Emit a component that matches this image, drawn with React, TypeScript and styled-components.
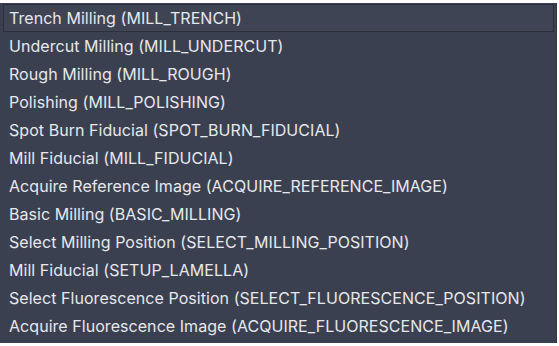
import styled, { createGlobalStyle } from "styled-components";

const GlobalStyle = createGlobalStyle`
    html, body {
        margin: 0;
        padding: 0;
        background: #ffffff;
    }
`

const items = [
    { label: 'Trench Milling', id: 'MILL_TRENCH' },
    { label: 'Undercut Milling', id: 'MILL_UNDERCUT' },
    { label: 'Rough Milling', id: 'MILL_ROUGH' },
    { label: 'Polishing', id: 'MILL_POLISHING' },
    { label: 'Spot Burn Fiducial', id: 'SPOT_BURN_FIDUCIAL' },
    { label: 'Mill Fiducial', id: 'MILL_FIDUCIAL' },
    { label: 'Acquire Reference Image', id: 'ACQUIRE_REFERENCE_IMAGE' },
    { label: 'Basic Milling', id: 'BASIC_MILLING' },
    { label: 'Select Milling Position', id: 'SELECT_MILLING_POSITION' },
    { label: 'Mill Fiducial', id: 'SETUP_LAMELLA' },
    { label: 'Select Fluorescence Position', id: 'SELECT_FLUORESCENCE_POSITION' },
    { label: 'Acquire Fluorescence Image', id: 'ACQUIRE_FLUORESCENCE_IMAGE' },
]

const Page = styled.div`
    padding: 3px 2px 4px 0;
    width: 559px;
    box-sizing: border-box;
`

const List = styled.ul`
    list-style: none;
    margin: 0;
    padding: 1px 0 3px;
    background: #3b4050;
    border-right: 1px solid #343947;
    display: flex;
    flex-direction: column;
`

interface IItemProps {
    selected?: boolean
}

const Item = styled.li<IItemProps>`
    height: 28px;
    box-sizing: border-box;
    display: flex;
    align-items: center;
    margin: 0 2px 0 3px;
    padding-left: 5px;
    font-family: "Inter", "Liberation Sans", sans-serif;
    font-size: 16px;
    letter-spacing: 0.05px;
    color: #e6e8ec;
    white-space: nowrap;
    background: ${(props) => props.selected ? '#3e4454' : 'transparent'};
    border: 1px solid ${(props) => props.selected ? '#2c303b' : 'transparent'};
`

export default function App() {
    return (
        <>
            <GlobalStyle />
            <Page>
                <List>
                    {items.map((item, i) => (
                        <Item key={i} selected={i === 0}>
                            {item.label} ({item.id})
                        </Item>
                    ))}
                </List>
            </Page>
        </>
    )
}
